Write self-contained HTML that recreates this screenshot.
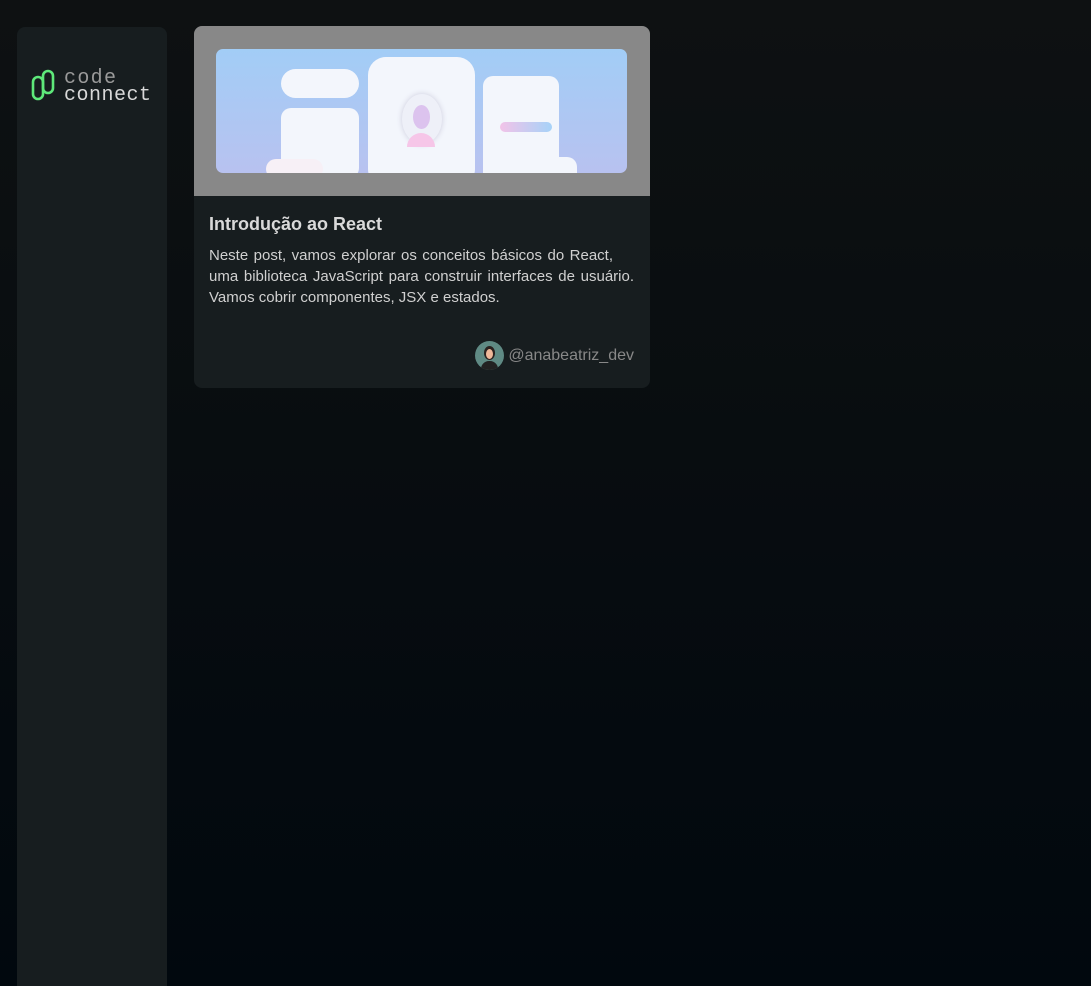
<!DOCTYPE html>
<html><head><meta charset="utf-8"><style>
*{margin:0;padding:0;box-sizing:border-box}
html,body{width:1091px;height:986px;overflow:hidden}
body{background:linear-gradient(180deg,#0e1112 0%,#01080e 100%);font-family:"Liberation Sans",sans-serif;position:relative}
.side{position:absolute;left:17px;top:27px;width:150px;height:959px;background:#171d1f;border-radius:8px 8px 0 0}
.card{position:absolute;left:194px;top:26px;width:456px;height:362px;background:#171d1f;border-radius:8px;overflow:hidden}
.imgbox{height:170px;background:#888888;position:relative}
.img{position:absolute;left:22px;top:23px;width:411px;height:124px;border-radius:7px;overflow:hidden;background:linear-gradient(180deg,#a2cdf6 0%,#b8c2f0 100%)}
.w{position:absolute;background:#f3f6fc;border-radius:10px}
h2{position:absolute;left:15px;top:188px;font-size:18px;color:#d9d9d9;font-weight:bold}
.p{position:absolute;left:15px;top:219px;width:425px;font-size:15px;line-height:21px;color:#d0d0d0}
.p div{text-align:justify;text-align-last:justify}
.p div.l{text-align-last:left}
.auth{position:absolute;right:16px;top:315px;display:flex;align-items:center;color:#888;font-size:16px}
.av{width:29px;height:29px;border-radius:50%;background:#5f8a84;margin-right:4px;position:relative;overflow:hidden}
</style></head><body>
<div class="side">
<svg style="position:absolute;left:14px;top:38px" width="136" height="42" viewBox="0 0 136 42">
<g fill="none" stroke="#5ee87a" stroke-width="2.6"><rect x="2" y="12" width="10" height="22" rx="5"/><rect x="12" y="6" width="10" height="22" rx="5"/></g>
<text x="33" y="18" font-family="Liberation Mono,monospace" font-size="20" fill="#9a9a9a" textLength="52">code</text>
<text x="33" y="35" font-family="Liberation Mono,monospace" font-size="20" fill="#d8d8d8" textLength="87">connect</text>
</svg></div>
<div class="card">
<div class="imgbox"><div class="img">
<div class="w" style="left:65px;top:20px;width:78px;height:29px;border-radius:15px"></div>
<div class="w" style="left:65px;top:59px;width:78px;height:70px"></div>
<div class="w" style="left:50px;top:110px;width:57px;height:20px;background:#f7f0f6"></div>
<div class="w" style="left:152px;top:8px;width:107px;height:130px;border-radius:18px"></div>
<div style="position:absolute;left:186px;top:45px;width:40px;height:50px;border-radius:50%;background:#eef0f8;box-shadow:0 0 6px #ccd"></div>
<div style="position:absolute;left:197px;top:56px;width:17px;height:24px;border-radius:50%;background:#dcc3ee"></div>
<div style="position:absolute;left:191px;top:84px;width:28px;height:14px;border-radius:14px 14px 0 0;background:#f6c6e8"></div>
<div class="w" style="left:267px;top:27px;width:76px;height:110px"></div>
<div style="position:absolute;left:284px;top:73px;width:52px;height:10px;border-radius:5px;background:linear-gradient(90deg,#f2c3e8,#a6d2f8)"></div>
<div class="w" style="left:283px;top:108px;width:78px;height:30px"></div>
</div></div>
<h2>Introdução ao React</h2>
<div class="p"><div style="width:404px">Neste post, vamos explorar os conceitos básicos do React,</div><div>uma biblioteca JavaScript para construir interfaces de usuário.</div><div class="l">Vamos cobrir componentes, JSX e estados.</div></div>
<div class="auth"><div class="av"><div style="position:absolute;left:9px;top:5px;width:11px;height:14px;border-radius:50%;background:#2a2220"></div><div style="position:absolute;left:11px;top:8px;width:7px;height:10px;border-radius:50%;background:#f0b89a"></div><div style="position:absolute;left:6px;top:20px;width:17px;height:12px;border-radius:8px 8px 0 0;background:#222"></div></div>@anabeatriz_dev</div>
</div>
</body></html>
